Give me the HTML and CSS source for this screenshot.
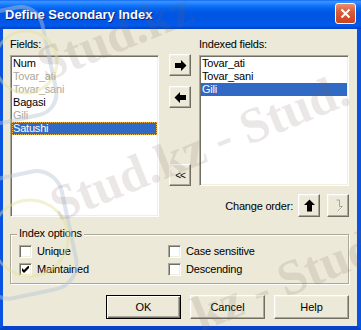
FILE: index.html
```html
<!DOCTYPE html>
<html lang="en">
<head>
    <meta charset="UTF-8">
    <title>Define Secondary Index</title>
    <link rel="stylesheet" href="styles.css">
</head>
<body>
    <div class="window">
        <div class="titlebar">
            <span class="title">Define Secondary Index</span>
            <button class="close">
                <svg width="11" height="11" viewBox="0 0 11 11"><path d="M1.5 1.5 L9.5 9.5 M9.5 1.5 L1.5 9.5" stroke="#fff" stroke-width="2"/></svg>
            </button>
        </div>
        <div class="client">
            <div class="columns">
                <div class="col-left">
                    <div class="label">Fields:</div>
                    <div class="listbox tall">
                        <div class="item">Num</div>
                        <div class="item muted">Tovar_ati</div>
                        <div class="item muted">Tovar_sani</div>
                        <div class="item">Bagasi</div>
                        <div class="item muted">Gili</div>
                        <div class="item selected focus">Satushi</div>
                    </div>
                </div>
                <div class="col-mid">
                    <button class="btn square add">
                        <svg width="13" height="11" viewBox="0 0 13 11"><polygon points="1,3 7,3 7,0 12.5,5.5 7,11 7,8 1,8" fill="#000"/></svg>
                    </button>
                    <button class="btn square remove">
                        <svg width="13" height="11" viewBox="0 0 13 11"><polygon points="12,3 6,3 6,0 0.5,5.5 6,11 6,8 12,8" fill="#000"/></svg>
                    </button>
                    <button class="btn square clear">&lt;&lt;</button>
                </div>
                <div class="col-right">
                    <div class="label">Indexed fields:</div>
                    <div class="listbox short">
                        <div class="item">Tovar_ati</div>
                        <div class="item">Tovar_sani</div>
                        <div class="item selected">Gili</div>
                    </div>
                    <div class="order">
                        <span>Change order:</span>
                        <button class="btn order-btn up">
                            <svg width="11" height="13" viewBox="0 0 11 13"><polygon points="3,12.5 3,6 0,6 5.5,0.5 11,6 8,6 8,12.5" fill="#000"/></svg>
                        </button>
                        <button class="btn order-btn down">
                            <svg width="12" height="14" viewBox="0 0 12 14"><path d="M4.5 1 H7.5 V7.5 H10.5 L5.5 12.5" fill="none" stroke="#A7A495"/><path d="M5.5 13.5 L11.5 7.5" fill="none" stroke="#fff"/></svg>
                        </button>
                    </div>
                </div>
            </div>

            <div class="group">
                <span class="legend">Index options</span>
                <div class="options">
                    <label class="check"><span class="box"></span>Unique</label>
                    <label class="check"><span class="box"></span>Case sensitive</label>
                    <label class="check"><span class="box"><svg width="7" height="7" viewBox="0 0 7 7"><polygon points="0,2 2,4 7,-1 7,2 2,7 0,5" fill="#000"/></svg></span>Maintained</label>
                    <label class="check"><span class="box"></span>Descending</label>
                </div>
            </div>

            <div class="actions">
                <button class="btn push default">OK</button>
                <button class="btn push">Cancel</button>
                <button class="btn push">Help</button>
            </div>
        </div>

        <!-- site watermark laid over the shot -->
        <svg class="logo" width="361" height="330" viewBox="0 0 361 330">
            <rect x="-30" y="10" width="80" height="110" rx="22" fill="none" stroke="#B9C6D6" stroke-width="4" transform="rotate(-12 10 65)"/>
            <circle cx="26" cy="62" r="31" fill="none" stroke="#E4E29A" stroke-width="3"/>
            <rect x="-25" y="175" width="95" height="120" rx="26" fill="none" stroke="#B9C6D6" stroke-width="4" transform="rotate(-12 22 235)"/>
            <circle cx="30" cy="238" r="38" fill="none" stroke="#E4E29A" stroke-width="3"/>
        </svg>
        <div class="watermark">
            <span class="mark m1">Stud.kz</span>
            <span class="mark m2">Stud.kz - Stud.</span>
            <span class="mark m3">kz - Stud.</span>
        </div>
    </div>
</body>
</html>
```

FILE: styles.css
```css
* {
    box-sizing: border-box;
}
body {
    margin: 0;
    font-family: "Liberation Sans", Arial, sans-serif;
    font-size: 11px;
    letter-spacing: -0.2px;
    color: #000;
}
.window {
    position: relative;
    width: 361px;
    height: 330px;
    display: flex;
    flex-direction: column;
    overflow: hidden;
}
.titlebar {
    height: 29px;
    flex: none;
    display: flex;
    align-items: flex-start;
    background: linear-gradient(to bottom, #0058EE 0, #3A93FF 1px, #2E8BFF 3px, #1579FB 5px, #0666F0 8px, #0058E6 12px, #0055E3 18px, #0058E8 23px, #005CEE 25px, #0050DA 27px, #003FC5 29px);
}
.title {
    padding: 5px 0 0 5px;
    line-height: 20px;
    font-size: 13px;
    font-weight: bold;
    letter-spacing: 0;
    color: #fff;
    text-shadow: 1px 1px 0 #0A1E7E;
}
.close {
    margin: 3px 5px 0 auto;
    width: 21px;
    height: 21px;
    padding: 0;
    border: 1px solid #fff;
    border-radius: 3px;
    background: linear-gradient(to bottom, #E9906F, #DA5C38 40%, #C9441F);
    display: flex;
    align-items: center;
    justify-content: center;
}
.client {
    flex: 1;
    background: #ECE9D8;
    border-left: 3px solid #0A53E0;
    border-right: 4px solid #0A53E0;
    border-bottom: 4px solid #0842C8;
    padding: 9px 8px 0 7px;
}
.columns {
    display: flex;
}
.col-left {
    width: 149px;
}
.col-mid {
    width: 22px;
    margin-left: 10px;
    display: flex;
    flex-direction: column;
}
.col-right {
    width: 150px;
    margin-left: 8px;
}
.label {
    height: 13px;
    line-height: 13px;
    margin-bottom: 4px;
}
.listbox {
    background: #fff;
    border: 1px solid;
    border-color: #ACA899 #fff #fff #ACA899;
    box-shadow: inset 1px 1px 0 #716F64, inset -1px -1px 0 #F1EFE2;
    padding: 1px;
}
.tall {
    height: 162px;
}
.short {
    height: 131px;
}
.item {
    height: 13px;
    line-height: 13px;
    padding-left: 1px;
    white-space: nowrap;
}
.muted {
    color: #ACA899;
}
.selected {
    background: #316AC5;
    color: #fff;
}
.focus {
    outline: 1px dotted #F0B64A;
    outline-offset: -1px;
}
.btn {
    font: inherit;
    color: #000;
    background: #ECE9D8;
    border: 1px solid;
    border-color: #fff #716F64 #716F64 #fff;
    box-shadow: inset -1px -1px 0 #ACA899, inset 1px 1px 0 #F1EFE2;
    padding: 0;
    display: flex;
    align-items: center;
    justify-content: center;
}
.square {
    width: 22px;
    height: 22px;
}
.add {
    margin-top: 16px;
}
.remove {
    margin-top: 10px;
}
.clear {
    margin-top: 56px;
    font-size: 10px;
    letter-spacing: -1px;
}
.order {
    margin-top: 8px;
    height: 23px;
    display: flex;
    align-items: center;
    justify-content: flex-end;
}
.order-btn {
    width: 22px;
    height: 23px;
}
.up {
    margin-left: 5px;
}
.down {
    margin-left: 7px;
}
.group {
    position: relative;
    margin-top: 17px;
    height: 50px;
    border: 1px solid #ACA899;
    box-shadow: inset 1px 1px 0 #fff, 1px 1px 0 #fff;
    padding: 10px 0 0 8px;
}
.legend {
    position: absolute;
    top: -8px;
    left: 6px;
    padding: 0 2px;
    line-height: 13px;
    background: #ECE9D8;
}
.options {
    display: grid;
    grid-template-columns: 149px auto;
    row-gap: 5px;
}
.check {
    display: flex;
    align-items: center;
    gap: 5px;
    height: 13px;
    line-height: 13px;
}
.box {
    width: 13px;
    height: 13px;
    background: #fff;
    border: 1px solid;
    border-color: #ACA899 #fff #fff #ACA899;
    box-shadow: inset 1px 1px 0 #716F64, inset -1px -1px 0 #F1EFE2;
    display: flex;
    align-items: center;
    justify-content: center;
}
.actions {
    margin-top: 11px;
    display: flex;
    justify-content: flex-end;
    gap: 9px;
}
.push {
    width: 75px;
    height: 24px;
}
.default {
    border: 1px solid #000;
    box-shadow: inset 1px 1px 0 #fff, inset -1px -1px 0 #716F64, inset -2px -2px 0 #ACA899;
}
.logo {
    position: absolute;
    left: 0;
    top: 0;
    opacity: 0.45;
    pointer-events: none;
}
.watermark {
    position: absolute;
    inset: 0;
    pointer-events: none;
}
.mark {
    position: absolute;
    left: 0;
    top: 0;
    white-space: nowrap;
    font-family: "Liberation Serif", serif;
    font-weight: bold;
    font-size: 50px;
    line-height: 50px;
    letter-spacing: 0;
    color: rgba(120, 95, 95, 0.15);
    transform-origin: 0 40px;
}
.m1 {
    transform: translate(45px, 40px) rotate(-22deg);
}
.m2 {
    transform: translate(58px, 180px) rotate(-22deg);
}
.m3 {
    transform: translate(200px, 290px) rotate(-22deg);
}
```
